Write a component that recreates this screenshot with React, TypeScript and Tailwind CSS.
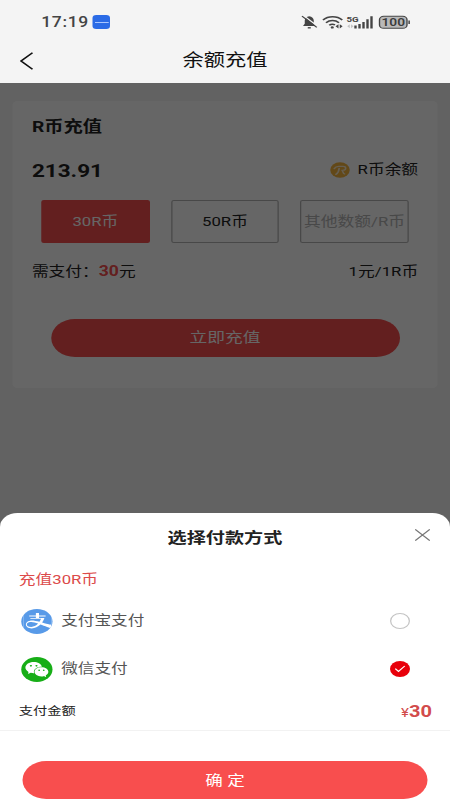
import React from 'react';
import clsx from 'clsx';
import { AiFillWechat } from 'react-icons/ai';
import { SiAlipay } from 'react-icons/si';

const AMOUNTS = [
  { label: '30R币', kind: 'active' },
  { label: '50R币', kind: 'normal' },
  { label: '其他数额/R币', kind: 'custom' },
];

const METHODS = [
  { id: 'alipay', label: '支付宝支付', checked: false },
  { id: 'wechat', label: '微信支付', checked: true },
];

const StatusIcons: React.FC = () => (
  <svg width="88" height="16" viewBox="0 0 88 16" fill="none" stroke="#444" className="mr-[32px]">
    {/* muted bell */}
    <path d="M2.4 12h10L11 9.8V6.6C11 4.1 9.6 2.6 7.4 2.2 5.2 2.6 3.8 4.1 3.8 6.6v3.2z" fill="#444" stroke="none" />
    <path d="M6.2 13.8h2.4" strokeWidth="1.4" />
    <path d="M3 1.6l11 10.6" stroke="#f4f4f4" strokeWidth="1.2" />
    <path d="M1.6 2.2l11.8 11.2" strokeWidth="1.1" />
    {/* wifi */}
    <path d="M18.4 6C22.6 1.7 29.6 1.7 33.8 6" strokeWidth="1.5" />
    <path d="M20.8 8.7c3-2.8 7.4-2.8 10.4 0" strokeWidth="1.5" />
    <path d="M23.4 11.3c1.5-1.4 3-1.5 4.6-.4" strokeWidth="1.5" />
    <circle cx="25.8" cy="13.4" r="1.2" fill="#444" stroke="none" />
    <path d="M30.8 10.2v4.2L28.4 12.3zM31.8 10.2v4.2l2.3-2.1z" fill="#444" stroke="none" />
    {/* cellular */}
    <text x="37.2" y="8" fontSize="7.8" fontWeight="700" fill="#444" stroke="none" fontFamily="Roboto, sans-serif">5G</text>
    <path d="M39.8 10.2v4l-2-2zM40.8 10.2v4l2-2z" fill="#c4c4c4" stroke="none" />
    <path d="M44.4 14.6v-3.2M47.6 14.6V10M50.8 14.6V8M54 14.6V5.2M57.2 14.6V2.2" strokeWidth="1.9" />
    {/* battery */}
    <rect x="63.6" y="2.3" width="22" height="12" rx="3.4" fill="#b9b9b9" strokeWidth="1.1" />
    <path d="M87.3 6.6v3.4" strokeWidth="1.2" />
    <text x="74.6" y="12.2" textAnchor="middle" fontSize="11" fontWeight="600" fill="#3c3c3c" stroke="none" fontFamily="Roboto, sans-serif">100</text>
  </svg>
);

const CoinIcon: React.FC = () => (
  <svg width="16" height="16" viewBox="0 0 16 16">
    <circle cx="8" cy="8" r="7.8" fill="#f5b43c" />
    <path d="M3.4 6.6c.8-1.6 2-2.2 3.6-2.2h3.4c2.8 0 2.8 3.5.2 3.8l-1.4.1c1.8.3.6 3.1 2.4 3.5M7.3 6.4c-.2 2.6-.9 4.8-2.6 6" fill="none" stroke="#fff" strokeOpacity=".75" strokeWidth="1.3" strokeLinecap="round" />
  </svg>
);

const MethodIcon: React.FC<{ id: string }> = ({ id }) =>
  id === 'alipay' ? (
    <div className="h-[25px] w-[25px] overflow-hidden rounded-full bg-[#589ae8] p-[1.5px]">
      <SiAlipay className="h-[22px] w-[22px] bg-white text-[#589ae8]" />
    </div>
  ) : (
    <div className="flex h-[25px] w-[25px] items-center justify-center rounded-full bg-[#17ae17]">
      <AiFillWechat className="h-[21px] w-[21px] text-white" />
    </div>
  );

const Radio: React.FC<{ checked: boolean }> = ({ checked }) =>
  checked ? (
    <div className="flex h-4 w-4 items-center justify-center rounded-full bg-[#e8000b]">
      <svg width="10" height="10" viewBox="0 0 10 10" fill="none" stroke="#fff" strokeWidth="1.1">
        <path d="M1.2 4.6L3.8 7.4 8.8 2" />
      </svg>
    </div>
  ) : (
    <div className="h-4 w-4 rounded-full border border-[#c4c4c4]" />
  );

const RechargeCard: React.FC = () => (
  <div className="mx-[10px] mt-[18px] h-[287px] rounded bg-white px-[15.5px] text-[13.4px] text-[#222]">
    <h2 className="flex h-[50px] items-center pt-[3px] text-[15.4px] font-bold">R币充值</h2>
    <div className="flex h-[38px] items-center justify-between">
      <span className="text-[18px] font-bold">213.91</span>
      <span className="flex items-center gap-[6px]">
        <CoinIcon />
        <span className="pt-px">R币余额</span>
      </span>
    </div>
    <div className="mt-[11px] flex gap-[17px] px-[7.5px]">
      {AMOUNTS.map((item) => (
        <div
          key={item.label}
          className={clsx(
            'flex h-[43px] w-[87px] items-center justify-center rounded-[2px] pt-[2px] whitespace-nowrap',
            item.kind === 'active' && 'bg-[#f84e4e] text-white',
            item.kind === 'normal' && 'border border-[#b4b4b4]',
            item.kind === 'custom' && 'border border-[#b4b4b4] text-[#b4b4b4]',
          )}
        >
          {item.label}
        </div>
      ))}
    </div>
    <div className="mt-[19px] flex h-5 items-center justify-between">
      <span>
        需支付：<b className="text-[14px] text-[#f84e4e]">30</b>元
      </span>
      <span>1元/1R币</span>
    </div>
    <button className="mx-auto mt-[37px] flex h-[38px] w-[279px] items-center justify-center rounded-full bg-[#f84e4e] text-[14.2px] text-white">
      立即充值
    </button>
  </div>
);

const PaymentSheet: React.FC = () => (
  <div className="flex h-[287px] flex-col rounded-t-[14px] bg-white">
    <div className="grid h-[49px] grid-cols-[1fr_auto_1fr] items-center">
      <span />
      <h2 className="pt-px text-[15.3px] font-bold text-[#222]">选择付款方式</h2>
      <svg width="12" height="12" viewBox="0 0 12 12" stroke="#777" strokeWidth="1.1" className="mr-[16px] -mt-[5px] justify-self-end">
        <path d="M.2.4l11.6 11.2M11.8.4L.2 11.6" />
      </svg>
    </div>
    <div className="flex h-[35px] items-center px-[15px] pt-px text-[13.4px] text-[#dc4a4a]">充值30R币</div>
    {METHODS.map((m) => (
      <div key={m.id} className="flex h-[48px] items-center pl-[17px] pr-8 text-[13.3px] text-[#555]">
        <MethodIcon id={m.id} />
        <span className="ml-[7px] flex-1">{m.label}</span>
        <Radio checked={m.checked} />
      </div>
    ))}
    <div className="flex h-[38px] items-center justify-between border-b border-[#f2f2f2] pr-[14.5px] pl-[15px] text-[11.4px] text-[#222]">
      <span className="pt-px">支付金额</span>
      <span className="text-[12px] text-[#d24b4b]">
        ¥<b className="text-[16px]">30</b>
      </span>
    </div>
    <button className="mx-[18px] mt-[30px] flex h-[38px] shrink-0 items-center justify-center rounded-full bg-[#f84e4e] text-[14px] text-white">
      确 定
    </button>
  </div>
);

export default function App() {
  return (
    <div className="h-[800px] w-[450px] overflow-hidden">
      <div className="relative flex h-[800px] w-[360px] origin-left scale-x-125 flex-col bg-[#f5f5f5] font-['Roboto','Noto_Sans_CJK_SC',sans-serif]">
        <header className="h-[83px] shrink-0 bg-[#f4f4f4]">
          <div className="flex h-[44px] items-center pl-[33px]">
            <span className="text-[14px] font-medium tracking-[0.5px] text-[#444]">17:19</span>
            <div className="ml-[3px] flex h-[14px] w-[14px] items-center justify-center rounded-[3px] bg-[#2b6be6]">
              <div className="h-px w-[11px] bg-[#a9c6ff]" />
            </div>
            <div className="flex-1" />
            <StatusIcons />
          </div>
          <div className="grid h-[33px] grid-cols-[1fr_auto_1fr] items-center">
            <svg width="11" height="18" viewBox="0 0 11 18" fill="none" stroke="#111" strokeWidth="1.4" className="ml-4">
              <path d="M10 .8L.9 9 10 17.2" />
            </svg>
            <h1 className="text-[17px] text-[#111]">余额充值</h1>
          </div>
        </header>
        <RechargeCard />
        <div className="absolute inset-x-0 top-[83px] bottom-0 flex flex-col justify-end bg-black/60">
          <PaymentSheet />
        </div>
      </div>
    </div>
  );
}
